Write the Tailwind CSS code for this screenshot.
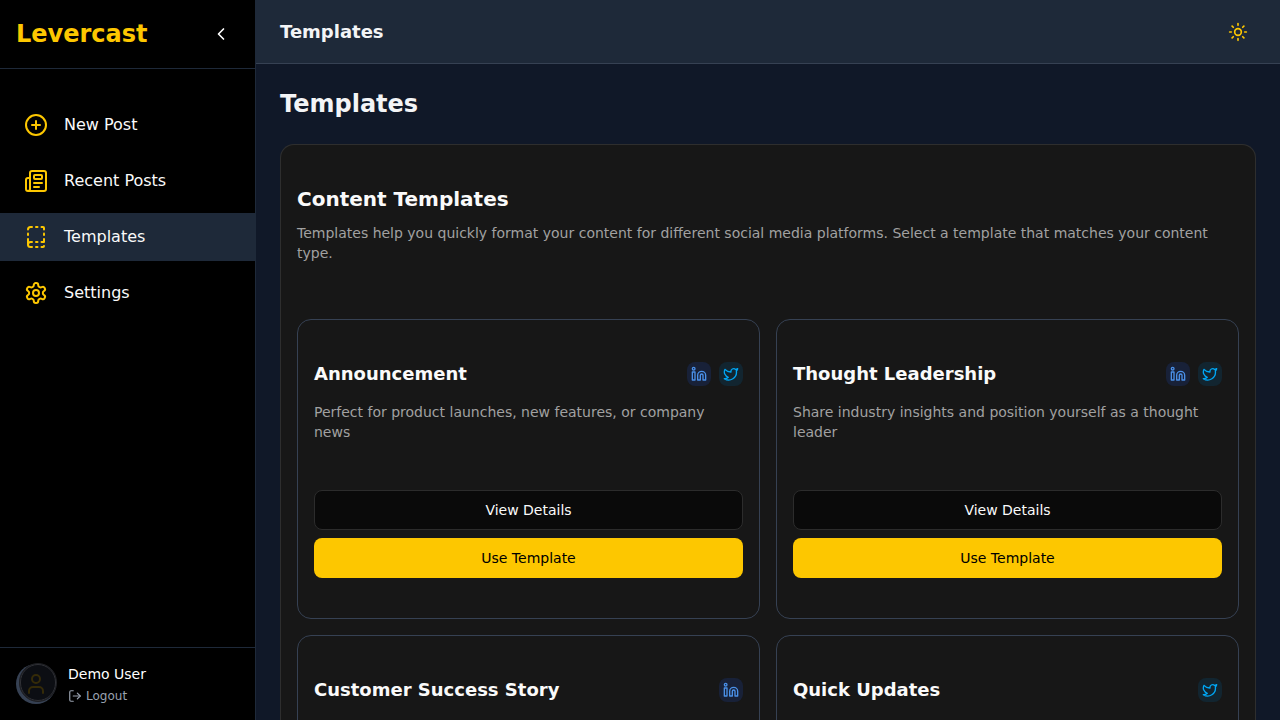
<!DOCTYPE html>
<html lang="en">
<head>
<meta charset="utf-8">
<title>Levercast</title>
<script src="https://cdn.jsdelivr.net/npm/@tailwindcss/browser@4"></script>
</head>
<body class="h-screen overflow-hidden bg-[#101828] font-['DejaVu_Sans',sans-serif] text-[#fafafa]">
<svg class="hidden">
  <defs>
    <symbol id="linkedin" viewBox="0 0 24 24" fill="none" stroke="currentColor" stroke-width="2" stroke-linecap="round" stroke-linejoin="round"><path d="M16 8a6 6 0 0 1 6 6v7h-4v-7a2 2 0 0 0-2-2 2 2 0 0 0-2 2v7h-4v-7a6 6 0 0 1 6-6z"/><rect width="4" height="12" x="2" y="9"/><circle cx="4" cy="4" r="2"/></symbol>
    <symbol id="twitter" viewBox="0 0 24 24" fill="none" stroke="currentColor" stroke-width="2" stroke-linecap="round" stroke-linejoin="round"><path d="M22 4s-.7 2.1-2 3.4c1.6 10-9.4 17.3-18 11.6 2.2.1 4.4-.6 6-2C3 15.5.5 9.6 3 5c2.2 2.6 5.6 4.1 9 4-.9-4.2 4-6.6 7-3.8 1.1 0 3-1.2 3-1.2z"/></symbol>
  </defs>
</svg>
<div class="flex h-full">
  <aside class="flex w-64 shrink-0 flex-col border-r border-[#1e2939] bg-black">
    <div class="flex items-center justify-between border-b border-[#1e2939] p-4">
      <span class="text-2xl/8 font-bold text-[#fdc700]">Levercast</span>
      <button class="flex size-9 items-center justify-center text-white"><svg class="size-5" viewBox="0 0 24 24" fill="none" stroke="currentColor" stroke-width="2" stroke-linecap="round" stroke-linejoin="round"><path d="m15 18-6-6 6-6"/></svg></button>
    </div>
    <nav class="flex flex-1 flex-col gap-2 pt-8">
      <a class="flex h-12 items-center gap-4 px-6"><svg class="size-6 text-[#fdc700]" viewBox="0 0 24 24" fill="none" stroke="currentColor" stroke-width="2" stroke-linecap="round" stroke-linejoin="round"><circle cx="12" cy="12" r="10"/><path d="M8 12h8"/><path d="M12 8v8"/></svg><span>New Post</span></a>
      <a class="flex h-12 items-center gap-4 px-6"><svg class="size-6 text-[#fdc700]" viewBox="0 0 24 24" fill="none" stroke="currentColor" stroke-width="2" stroke-linecap="round" stroke-linejoin="round"><path d="M15 18h-5"/><path d="M18 14h-8"/><path d="M4 22h16a2 2 0 0 0 2-2V4a2 2 0 0 0-2-2H8a2 2 0 0 0-2 2v16a2 2 0 0 1-4 0v-9a2 2 0 0 1 2-2h2"/><rect width="8" height="4" x="10" y="6" rx="1"/></svg><span>Recent Posts</span></a>
      <a class="flex h-12 items-center gap-4 bg-[#1e2939] px-6"><svg class="size-6 text-[#fdc700]" viewBox="0 0 24 24" fill="none" stroke="currentColor" stroke-width="2" stroke-linecap="round" stroke-linejoin="round"><path d="M12 17h1.5"/><path d="M12 22h1.5"/><path d="M12 2h1.5"/><path d="M17.5 22H19a1 1 0 0 0 1-1"/><path d="M17.5 2H19a1 1 0 0 1 1 1v1.5"/><path d="M20 14v3h-2.5"/><path d="M20 8.5V10"/><path d="M4 10V8.5"/><path d="M4 19.5V14"/><path d="M4 4.5A2.5 2.5 0 0 1 6.5 2H8"/><path d="M8 22H6.5a1 1 0 0 1 0-5H8"/></svg><span>Templates</span></a>
      <a class="flex h-12 items-center gap-4 px-6"><svg class="size-6 text-[#fdc700]" viewBox="0 0 24 24" fill="none" stroke="currentColor" stroke-width="2" stroke-linecap="round" stroke-linejoin="round"><path d="M12.22 2h-.44a2 2 0 0 0-2 2v.18a2 2 0 0 1-1 1.73l-.43.25a2 2 0 0 1-2 0l-.15-.08a2 2 0 0 0-2.73.73l-.22.38a2 2 0 0 0 .73 2.73l.15.1a2 2 0 0 1 1 1.72v.51a2 2 0 0 1-1 1.74l-.15.09a2 2 0 0 0-.73 2.73l.22.38a2 2 0 0 0 2.73.73l.15-.08a2 2 0 0 1 2 0l.43.25a2 2 0 0 1 1 1.73V20a2 2 0 0 0 2 2h.44a2 2 0 0 0 2-2v-.18a2 2 0 0 1 1-1.73l.43-.25a2 2 0 0 1 2 0l.15.08a2 2 0 0 0 2.73-.73l.22-.39a2 2 0 0 0-.73-2.73l-.15-.08a2 2 0 0 1-1-1.74v-.5a2 2 0 0 1 1-1.74l.15-.09a2 2 0 0 0 .73-2.73l-.22-.38a2 2 0 0 0-2.73-.73l-.15.08a2 2 0 0 1-2 0l-.43-.25a2 2 0 0 1-1-1.73V4a2 2 0 0 0-2-2z"/><circle cx="12" cy="12" r="3"/></svg><span>Settings</span></a>
    </nav>
    <div class="flex items-center gap-3 border-t border-[#1e2939] p-4">
      <div class="relative flex size-10 items-center justify-center rounded-full bg-[#364153]">
        <div class="absolute -top-px left-[2.5px] size-[38.5px] rounded-full border border-[#1f2024] bg-[#0c0e13]"></div>
        <div class="absolute top-0 left-[3.5px] size-[36.5px] rounded-full border border-[#303136]"></div>
        <svg class="relative size-6 text-[#352b08]" viewBox="0 0 24 24" fill="none" stroke="currentColor" stroke-width="2" stroke-linecap="round" stroke-linejoin="round"><path d="M19 21v-2a4 4 0 0 0-4-4H9a4 4 0 0 0-4 4v2"/><circle cx="12" cy="7" r="4"/></svg>
      </div>
      <div class="flex flex-col">
        <span class="text-sm font-medium text-white">Demo User</span>
        <span class="mt-1 flex items-center gap-1 text-xs text-[#99a1af]"><svg class="size-3.5" viewBox="0 0 24 24" fill="none" stroke="currentColor" stroke-width="2" stroke-linecap="round" stroke-linejoin="round"><path d="M9 21H5a2 2 0 0 1-2-2V5a2 2 0 0 1 2-2h4"/><path d="m16 17 5-5-5-5"/><path d="M21 12H9"/></svg>Logout</span>
      </div>
    </div>
  </aside>
  <div class="flex min-w-0 flex-1 flex-col">
    <header class="flex h-16 shrink-0 items-center justify-between border-b border-[#364153] bg-[#1e2939] px-6">
      <span class="text-lg font-semibold text-[#f3f4f6]">Templates</span>
      <button class="flex size-9 items-center justify-center text-[#fdc700]"><svg class="size-5" viewBox="0 0 24 24" fill="none" stroke="currentColor" stroke-width="2" stroke-linecap="round" stroke-linejoin="round"><circle cx="12" cy="12" r="4"/><path d="M12 2v2"/><path d="M12 20v2"/><path d="m4.93 4.93 1.41 1.41"/><path d="m17.66 17.66 1.41 1.41"/><path d="M2 12h2"/><path d="M20 12h2"/><path d="m6.34 17.66-1.41 1.41"/><path d="m19.07 4.93-1.41 1.41"/></svg></button>
    </header>
    <main class="flex-1 overflow-hidden p-6">
      <h1 class="text-2xl/8 font-bold text-[#f3f4f6]">Templates</h1>
      <section class="mt-6 rounded-[14px] border border-white/10 bg-[#171717] px-4 py-10">
        <h2 class="text-xl/7 font-bold">Content Templates</h2>
        <p class="mt-2.5 text-sm/5 text-[#a1a1a1]">Templates help you quickly format your content for different social media platforms. Select a template that matches your content type.</p>
        <div class="mt-14 grid grid-cols-2 gap-4">
          <article class="h-[300px] rounded-[14px] border border-[#364153] px-4 py-10">
            <div class="flex h-7 items-center justify-between">
              <h3 class="text-lg/7 font-bold">Announcement</h3>
              <div class="flex gap-2">
                <span class="flex size-6 items-center justify-center rounded-lg bg-[#182138] text-[#4a90e8]"><svg class="size-4"><use href="#linkedin"/></svg></span>
                <span class="flex size-6 items-center justify-center rounded-lg bg-[#122530] text-[#00a6f4]"><svg class="size-4"><use href="#twitter"/></svg></span>
              </div>
            </div>
            <p class="mt-3.5 text-sm/5 text-[#a1a1a1]">Perfect for product launches, new features, or company news</p>
            <div class="mt-12 flex flex-col gap-2">
              <button class="h-10 rounded-lg border border-[#2c2c2c] bg-[#0a0a0a] text-sm font-medium">View Details</button>
              <button class="h-10 rounded-lg bg-[#fdc700] text-sm font-medium text-black">Use Template</button>
            </div>
          </article>
          <article class="h-[300px] rounded-[14px] border border-[#364153] px-4 py-10">
            <div class="flex h-7 items-center justify-between">
              <h3 class="text-lg/7 font-bold">Thought Leadership</h3>
              <div class="flex gap-2">
                <span class="flex size-6 items-center justify-center rounded-lg bg-[#182138] text-[#4a90e8]"><svg class="size-4"><use href="#linkedin"/></svg></span>
                <span class="flex size-6 items-center justify-center rounded-lg bg-[#122530] text-[#00a6f4]"><svg class="size-4"><use href="#twitter"/></svg></span>
              </div>
            </div>
            <p class="mt-3.5 text-sm/5 text-[#a1a1a1]">Share industry insights and position yourself as a thought leader</p>
            <div class="mt-12 flex flex-col gap-2">
              <button class="h-10 rounded-lg border border-[#2c2c2c] bg-[#0a0a0a] text-sm font-medium">View Details</button>
              <button class="h-10 rounded-lg bg-[#fdc700] text-sm font-medium text-black">Use Template</button>
            </div>
          </article>
          <article class="h-[300px] rounded-[14px] border border-[#364153] px-4 py-10">
            <div class="flex h-7 items-center justify-between">
              <h3 class="text-lg/7 font-bold">Customer Success Story</h3>
              <span class="flex size-6 items-center justify-center rounded-lg bg-[#182138] text-[#4a90e8]"><svg class="size-4"><use href="#linkedin"/></svg></span>
            </div>
          </article>
          <article class="h-[300px] rounded-[14px] border border-[#364153] px-4 py-10">
            <div class="flex h-7 items-center justify-between">
              <h3 class="text-lg/7 font-bold">Quick Updates</h3>
              <span class="flex size-6 items-center justify-center rounded-lg bg-[#122530] text-[#00a6f4]"><svg class="size-4"><use href="#twitter"/></svg></span>
            </div>
          </article>
        </div>
      </section>
    </main>
  </div>
</div>
</body>
</html>
